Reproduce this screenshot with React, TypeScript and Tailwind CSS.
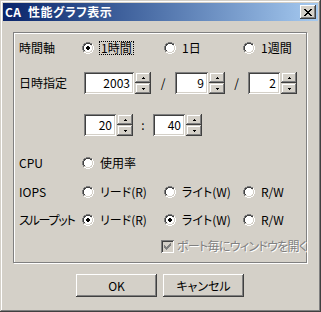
import React from "react";

const RADIO = [
  "....GGGG....",
  "..GGDDDDGG..",
  ".GDDwwwwDDW.",
  ".GDwwwwwwLW.",
  "GDwwwwwwwwLW",
  "GDwwwwwwwwLW",
  "GDwwwwwwwwLW",
  "GDwwwwwwwwLW",
  ".GDwwwwwwLW.",
  ".GLLwwwwLLW.",
  "..WWLLLLWW..",
  "....WWWW....",
];
const DOT = ["............", "............", "............", "............", ".....XX.....", "....XXXX....", "....XXXX....", ".....XX.....", "............", "............", "............", "............"];
const COLORS: Record<string, string> = { G: "#808080", D: "#404040", W: "#ffffff", L: "#d4d0c8", w: "#ffffff", X: "#000000" };

function Pixels({ rows, w, h, color }: { rows: string[]; w: number; h: number; color?: string }) {
  const rects: React.ReactNode[] = [];
  rows.forEach((r, y) =>
    r.split("").forEach((c, x) => {
      if (c !== ".") rects.push(<rect key={`${x}-${y}`} x={x} y={y} width={1} height={1} fill={color ?? COLORS[c]} />);
    })
  );
  return (
    <svg width={w} height={h} viewBox={`0 0 ${w} ${h}`} shapeRendering="crispEdges" className="block shrink-0">
      {rects}
    </svg>
  );
}

function Radio({ checked }: { checked?: boolean }) {
  return (
    <div className="relative h-[12px] w-[12px] shrink-0">
      <Pixels rows={RADIO} w={12} h={12} />
      {checked && (
        <div className="absolute inset-0">
          <Pixels rows={DOT} w={12} h={12} />
        </div>
      )}
    </div>
  );
}

function Option({ label, checked, focus, className }: { label: string; checked?: boolean; focus?: boolean; className: string }) {
  return (
    <div className={`flex h-[16px] items-center ${className}`}>
      <Radio checked={checked} />
      {focus ? (
        <span className="ml-[5px] border border-dotted border-black pl-[1px] pr-[1px] leading-[12px]">{label}</span>
      ) : (
        <span className="ml-[6px] whitespace-nowrap leading-[12px]">{label}</span>
      )}
    </div>
  );
}

const ARROW_UP = [".X.", "XXX"];
const ARROW_DN = ["XXX", ".X."];

function SpinBtn({ up }: { up?: boolean }) {
  return (
    <div className="flex h-[11px] w-[16px] items-center justify-center bg-[#d4d0c8] shadow-[inset_-1px_-1px_#404040,inset_1px_1px_#d4d0c8,inset_-2px_-2px_#808080,inset_2px_2px_#fff]">
      <Pixels rows={up ? ARROW_UP : ARROW_DN} w={3} h={2} />
    </div>
  );
}

function Spin({ value, box }: { value: string; box: string }) {
  return (
    <div className="flex h-[22px] shrink-0">
      <div
        className={`flex h-[22px] items-center justify-end bg-white pr-[4px] shadow-[inset_1px_1px_#808080,inset_-1px_-1px_#fff,inset_2px_2px_#404040,inset_-2px_-2px_#d4d0c8] ${box}`}
      >
        {value}
      </div>
      <div className="ml-[1px] flex flex-col">
        <SpinBtn up />
        <SpinBtn />
      </div>
    </div>
  );
}

const CLOSE_X = ["XX....XX", ".XX..XX.", "..XXXX..", "...XX...", "..XXXX..", ".XX..XX.", "XX....XX"];
const CHECK = ["......X", ".....XX", "X...XXX", "XX.XXX.", "XXXXX..", ".XXX...", "..X...."];

function Button({ children }: { children: React.ReactNode }) {
  return (
    <div className="flex h-[23px] w-[81px] items-center justify-center bg-[#d4d0c8] shadow-[inset_-1px_-1px_#404040,inset_1px_1px_#fff,inset_-2px_-2px_#808080,inset_2px_2px_#d4d0c8]">
      {children}
    </div>
  );
}

export default function App() {
  return (
    <div className="flex h-[312px] w-[321px] flex-col bg-[#d4d0c8] p-[3px] font-['Noto_Sans_CJK_JP',sans-serif] text-[12px] text-black [font-feature-settings:'palt'] shadow-[inset_-1px_-1px_#404040,inset_1px_1px_#d4d0c8,inset_-2px_-2px_#808080,inset_2px_2px_#fff]">
      {/* title bar */}
      <div className="flex h-[18px] items-center bg-gradient-to-r from-[#0a246a] to-[#a6caf0] pl-[2px] pr-[2px]">
        <span className="whitespace-pre font-bold leading-[12px] tracking-[0.5px] text-white">CA  性能グラフ表示</span>
        <div className="ml-auto flex h-[14px] w-[16px] items-center justify-center bg-[#d4d0c8] shadow-[inset_-1px_-1px_#404040,inset_1px_1px_#fff,inset_-2px_-2px_#808080,inset_2px_2px_#d4d0c8]">
          <Pixels rows={CLOSE_X} w={8} h={7} />
        </div>
      </div>

      {/* group box */}
      <div className="ml-[10px] mt-[11px] flex h-[231px] w-[294px] flex-col border border-[#808080] pl-[5px] shadow-[inset_1px_1px_#fff,1px_1px_#fff]">
        <div className="mt-[7px] flex h-[16px] items-center">
          <span className="w-[63px] shrink-0">時間軸</span>
          <Option label="1時間" checked focus className="w-[82px]" />
          <Option label="1日" className="w-[79px]" />
          <Option label="1週間" className="w-[60px]" />
        </div>

        <div className="mt-[16px] flex h-[22px] items-center">
          <span className="w-[63px] shrink-0">日時指定</span>
          <div className="ml-[2px] flex items-center">
            <Spin value="2003" box="w-[50px]" />
            <span className="w-[24px] text-center">/</span>
            <Spin value="9" box="w-[33px]" />
            <span className="w-[23px] text-center">/</span>
            <Spin value="2" box="w-[32px]" />
          </div>
        </div>

        <div className="mt-[20px] flex h-[22px] items-center">
          <div className="ml-[65px] flex items-center">
            <Spin value="20" box="w-[32px]" />
            <span className="w-[20px] text-center">:</span>
            <Spin value="40" box="w-[32px]" />
          </div>
        </div>

        <div className="mt-[19px] flex h-[16px] items-center">
          <span className="w-[63px] shrink-0">CPU</span>
          <Option label="使用率" className="w-[82px]" />
        </div>

        <div className="mt-[13px] flex h-[16px] items-center">
          <span className="w-[63px] shrink-0">IOPS</span>
          <Option label="リード(R)" className="w-[82px]" />
          <Option label="ライト(W)" className="w-[79px]" />
          <Option label="R/W" className="w-[60px]" />
        </div>

        <div className="mt-[12px] flex h-[16px] items-center">
          <span className="w-[63px] shrink-0 whitespace-nowrap tracking-[-1.2px]">スループット</span>
          <Option label="リード(R)" checked className="w-[82px]" />
          <Option label="ライト(W)" checked className="w-[79px]" />
          <Option label="R/W" className="w-[60px]" />
        </div>

        <div className="mt-[10px] flex h-[16px] items-center">
          <div className="ml-[142px] flex h-[13px] w-[13px] shrink-0 items-center justify-center bg-[#d4d0c8] shadow-[inset_1px_1px_#808080,inset_-1px_-1px_#fff,inset_2px_2px_#404040,inset_-2px_-2px_#d4d0c8]">
            <Pixels rows={CHECK} w={7} h={7} color="#808080" />
          </div>
          <span className="ml-[3px] whitespace-nowrap tracking-[-0.7px] text-[#808080] [text-shadow:1px_1px_0_#fff]">ポート毎にウィンドウを開く</span>
        </div>
      </div>

      {/* buttons */}
      <div className="ml-[73px] mt-[11px] flex gap-[6px]">
        <Button>OK</Button>
        <Button>キャンセル</Button>
      </div>
    </div>
  );
}
